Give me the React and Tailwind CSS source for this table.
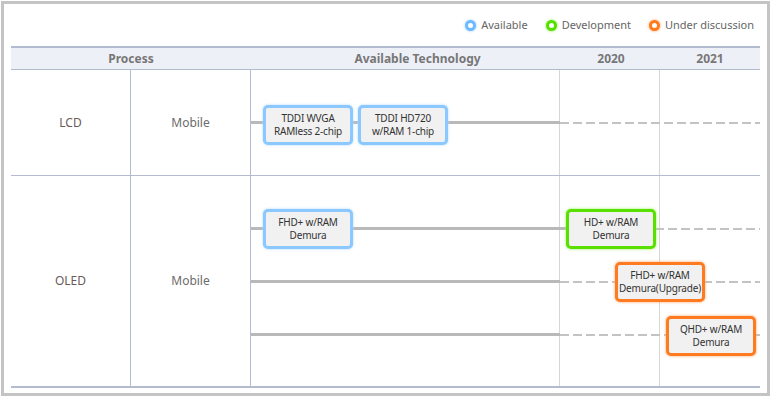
import React from 'react';

const font = { fontFamily: '"Noto Sans", "Open Sans", sans-serif' };

const boxColors = {
  blue: 'border-[#8ac8ff] shadow-[0_0_3px_#b0daff]',
  green: 'border-[#5ae000] shadow-[0_0_3px_#94f055]',
  orange: 'border-[#ff7b21] shadow-[0_0_3px_#ffa566]',
};

const Node = ({ color, left, top, children }) => (
  <div
    className={`absolute w-[90px] h-[40px] rounded-[5px] border-[3px] bg-[#f1f1f1] flex flex-col items-center justify-center text-[10px] leading-[13px] tracking-[-0.2px] text-[#333] ${boxColors[color]}`}
    style={{ left, top }}
  >
    {children}
  </div>
);

// one timeline track: solid through the tech column, dashed across the years
const Track = ({ top, solidTo = 309, dashFrom = 309 }) => (
  <>
    <div className="absolute left-0 h-[3px] bg-[#b9b9b9]" style={{ top, width: solidTo }} />
    <div
      className="absolute right-0 h-[2px] bg-[repeating-linear-gradient(90deg,#c3c3c3_0_9px,transparent_9px_13px)]"
      style={{ top: top + 0.5, left: dashFrom }}
    />
  </>
);

const YearGrid = () => (
  <div className="absolute inset-0 flex">
    <div className="w-[309px]" />
    <div className="w-[100px] border-l border-[#d6d6d6]" />
    <div className="w-[101px] border-l border-[#d6d6d6]" />
  </div>
);

const Legend = ({ ring, glow, label }) => (
  <div className="flex items-center gap-[5px]">
    <span className={`w-[11px] h-[11px] rounded-full border-[3px] bg-white ${ring} ${glow}`} />
    <span>{label}</span>
  </div>
);

export default function App() {
  return (
    <div className="w-[771px] h-[397px] bg-white p-[1px]" style={font}>
      <div className="w-[769px] h-[395px] border-[3px] border-[#c4c4c4] pl-[7px] pr-[6px] flex flex-col">
        {/* legend */}
        <div className="h-[42px] flex items-center justify-end gap-[18px] pr-[7px] text-[11px] text-[#666]">
          <Legend ring="border-[#6fb9ff]" glow="shadow-[0_0_3px_#9fd0ff]" label="Available" />
          <Legend ring="border-[#55e000]" glow="shadow-[0_0_3px_#8cf04a]" label="Development" />
          <Legend ring="border-[#ff7a1f]" glow="shadow-[0_0_3px_#ffa060]" label="Under discussion" />
        </div>

        {/* table */}
        <div className="w-[749px] border-t-2 border-b-2 border-[#b3bccf]">
          <div className="h-[22px] bg-[#eef0f8] border-b border-[#b3bacd] flex items-center text-[12px] font-bold text-[#777]">
            <div className="w-[240px] text-center">Process</div>
            <div className="w-[309px] pl-[24px] text-center">Available Technology</div>
            <div className="w-[100px] text-center pl-[2px]">2020</div>
            <div className="w-[100px] text-center">2021</div>
          </div>

          {/* LCD */}
          <div className="h-[106px] flex border-b border-[#b3bccf] text-[12px]">
            <div className="w-[120px] border-r border-[#b3bccf] flex items-center justify-center text-[#6b5a5a]">LCD</div>
            <div className="w-[120px] border-r border-[#b3bccf] flex items-center justify-center text-[#6b6b6b]">Mobile</div>
            <div className="relative w-[509px]">
              <YearGrid />
              <Track top={51} />
              <Node color="blue" left={12} top={35}>
                <span>TDDI WVGA</span>
                <span>RAMless 2-chip</span>
              </Node>
              <Node color="blue" left={107} top={35}>
                <span>TDDI HD720</span>
                <span>w/RAM 1-chip</span>
              </Node>
            </div>
          </div>

          {/* OLED */}
          <div className="h-[210px] flex text-[12px]">
            <div className="w-[120px] border-r border-[#b3bccf] flex items-center justify-center text-[#6b5a5a]">OLED</div>
            <div className="w-[120px] border-r border-[#b3bccf] flex items-center justify-center text-[#6b6b6b]">Mobile</div>
            <div className="relative w-[509px]">
              <YearGrid />
              <Track top={51} solidTo={315} dashFrom={404} />
              <Track top={104} />
              <Track top={157} />
              <Node color="blue" left={12} top={33}>
                <span>FHD+ w/RAM</span>
                <span>Demura</span>
              </Node>
              <Node color="green" left={315} top={33}>
                <span>HD+ w/RAM</span>
                <span>Demura</span>
              </Node>
              <Node color="orange" left={364} top={86}>
                <span>FHD+ w/RAM</span>
                <span>Demura(Upgrade)</span>
              </Node>
              <Node color="orange" left={415} top={140}>
                <span>QHD+ w/RAM</span>
                <span>Demura</span>
              </Node>
            </div>
          </div>
        </div>
      </div>
    </div>
  );
}
